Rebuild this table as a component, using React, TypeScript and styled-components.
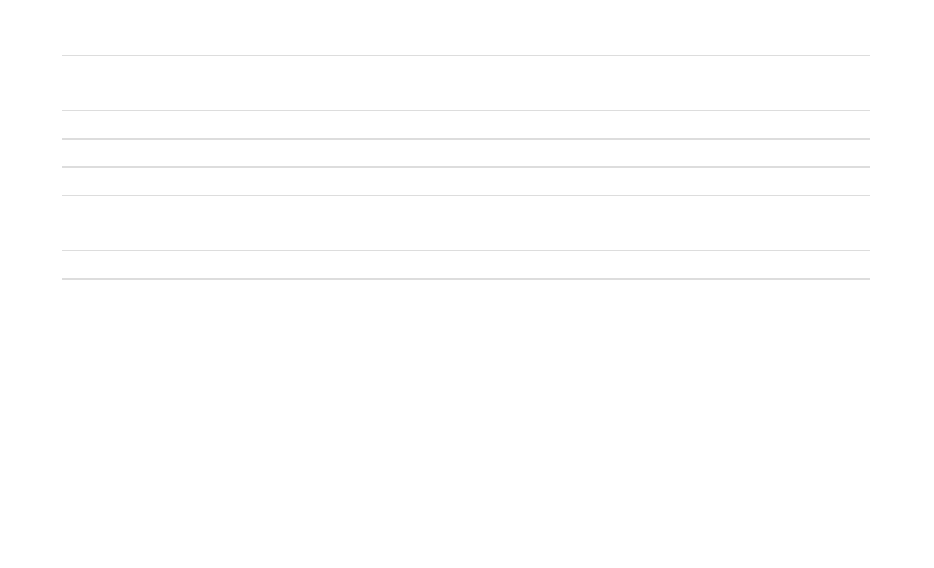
import React from "react";
import styled, { createGlobalStyle } from "styled-components";

const Global = createGlobalStyle`
  html, body { margin: 0; padding: 0; background: #ffffff; }
  body { font-family: "Liberation Sans", Arial, sans-serif; color: #333; }
`;

const Page = styled.div`
  width: 934px;
  height: 568px;
  padding: 55px 64px 0 62px;
  box-sizing: border-box;
`;

const Table = styled.div`
  display: flex;
  flex-direction: column;
  width: 808px;
  border-bottom: 2px solid #dddddd;
`;

const Row = styled.div<{ $h: number; $b: number }>`
  box-sizing: border-box;
  height: ${(p) => p.$h}px;
  border-top: ${(p) => p.$b}px solid #dddddd;
  display: flex;
  align-items: center;
  font-size: 13px;
`;

const rows = [
  { h: 55, b: 1 },
  { h: 28, b: 1 },
  { h: 28, b: 2 },
  { h: 29, b: 2 },
  { h: 55, b: 1 },
  { h: 28, b: 1 },
];

export default function App() {
  return (
    <>
      <Global />
      <Page>
        <Table>
          {rows.map((r, i) => (
            <Row key={i} $h={r.h} $b={r.b} />
          ))}
        </Table>
      </Page>
    </>
  );
}
